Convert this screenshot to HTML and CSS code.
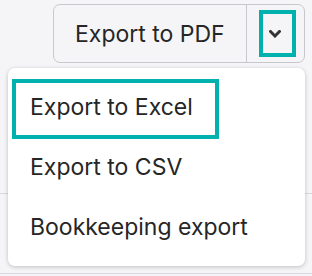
FILE: index.html
```html
<!DOCTYPE html>
<html>
<head>
<meta charset="utf-8">
<link rel="stylesheet" href="styles.css">
</head>
<body>
<div class="page">
  <div class="toolbar">
    <div class="btn-group">
      <button class="btn-main">Export to PDF</button>
      <button class="btn-toggle">
        <span class="focus-box">
          <svg class="chev" width="12" height="8" viewBox="0 0 12 8"><path d="M1.5 1.5 L6 6 L10.5 1.5" fill="none" stroke="#333" stroke-width="3" stroke-linecap="square"/></svg>
        </span>
      </button>
    </div>
  </div>
  <div class="rows">
    <div class="row"></div>
    <div class="row"></div>
  </div>
  <div class="menu">
    <div class="item item-focus">Export to Excel</div>
    <div class="item">Export to CSV</div>
    <div class="item">Bookkeeping export</div>
  </div>
</div>
</body>
</html>
```
FILE: styles.css
```css
* { box-sizing: border-box; }
html, body { margin: 0; padding: 0; }
body {
  background: #f5f5f7;
  font-family: Inter, "Noto Sans", sans-serif;
  color: #222;
  width: 312px;
  height: 276px;
  overflow: hidden;
}
.page { position: relative; height: 276px; }
.toolbar {
  display: flex;
  justify-content: flex-end;
  padding: 4px 7px 0 0;
}
.btn-group {
  display: flex;
  height: 59px;
  border: 1px solid #c8c8cc;
  border-radius: 7px;
  background: #f5f5f7;
}
.btn-main {
  font-family: inherit;
  font-size: 23px;
  color: #262626;
  background: transparent;
  border: 0;
  border-right: 1px solid #c8c8cc;
  width: 193px;
  padding: 0 0 0 21px;
  text-align: left;
}
.btn-toggle {
  background: transparent;
  border: 0;
  width: 57px;
  padding: 0;
  display: flex;
  align-items: flex-start;
  padding: 5px 0 0 12px;
}
.focus-box {
  width: 37px;
  height: 47px;
  border: 4px solid #00b1ad;
  display: flex;
  align-items: center;
  justify-content: center;
}
.chev { display: block; margin-left: -5px; }
.rows { margin-top: 51px; }
.row { height: 80px; border-bottom: 1px solid #d9d9dd; }
.menu {
  position: absolute;
  left: 8px;
  top: 68px;
  width: 297px;
  height: 198px;
  background: #fff;
  border-radius: 7px;
  box-shadow: 0 1px 4px rgba(0,0,0,0.22);
  padding: 9px 0;
}
.item {
  position: relative;
  height: 60px;
  display: flex;
  align-items: center;
  padding-left: 22px;
  font-size: 23px;
  color: #262626;
}
.item-focus::after {
  content: "";
  position: absolute;
  left: 4px;
  top: 2px;
  width: 199px;
  height: 52px;
  border: 4px solid #00b1ad;
}
```
